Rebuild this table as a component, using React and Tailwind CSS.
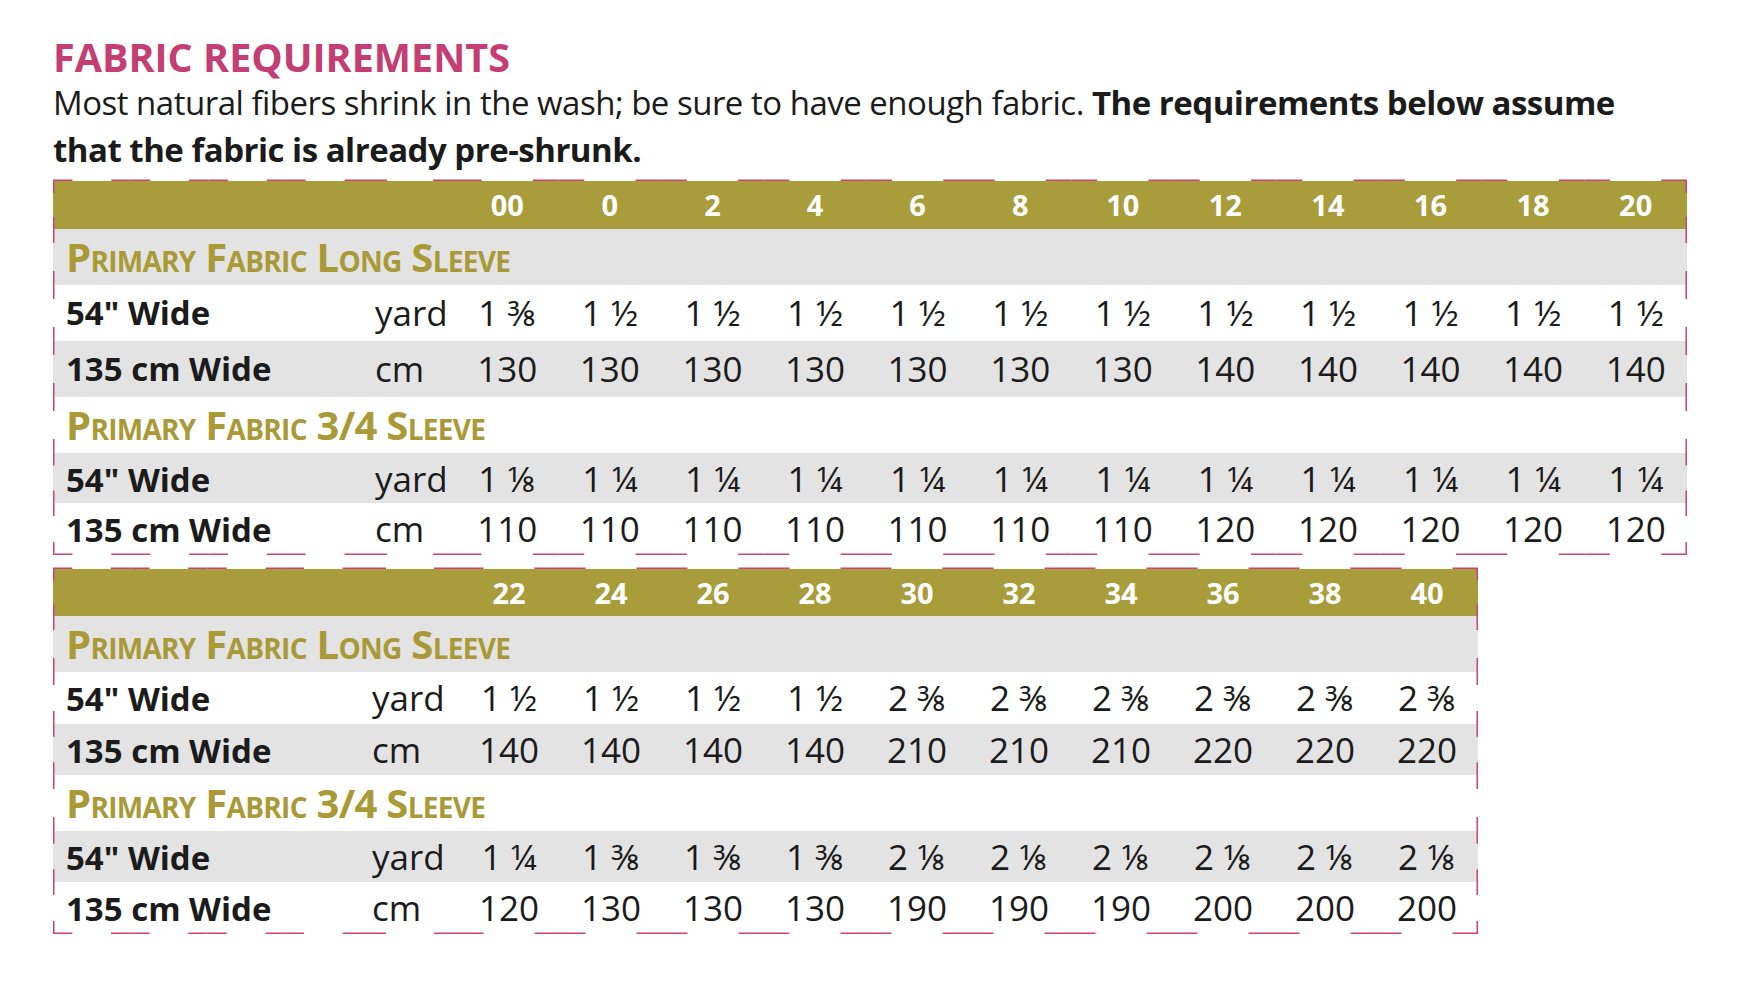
import React from "react";

const FONT = "[font-family:'Open_Sans',sans-serif]";

const table1 = {
  sizes: ["00", "0", "2", "4", "6", "8", "10", "12", "14", "16", "18", "20"],
  labelW: 311,
  unitW: 92,
  colW: 102.58,
  unitPad: "pl-[11px]",
  rowH: [48, 56, 56, 56, 56, 50, 52],
  long: {
    yard: ["1 ⅜", "1 ½", "1 ½", "1 ½", "1 ½", "1 ½", "1 ½", "1 ½", "1 ½", "1 ½", "1 ½", "1 ½"],
    cm: ["130", "130", "130", "130", "130", "130", "130", "140", "140", "140", "140", "140"],
  },
  three: {
    yard: ["1 ⅛", "1 ¼", "1 ¼", "1 ¼", "1 ¼", "1 ¼", "1 ¼", "1 ¼", "1 ¼", "1 ¼", "1 ¼", "1 ¼"],
    cm: ["110", "110", "110", "110", "110", "110", "110", "120", "120", "120", "120", "120"],
  },
};

const table2 = {
  sizes: ["22", "24", "26", "28", "30", "32", "34", "36", "38", "40"],
  labelW: 309,
  unitW: 96,
  colW: 102,
  unitPad: "pl-[10px]",
  rowH: [47, 56, 52, 51, 56, 51, 52],
  long: {
    yard: ["1 ½", "1 ½", "1 ½", "1 ½", "2 ⅜", "2 ⅜", "2 ⅜", "2 ⅜", "2 ⅜", "2 ⅜"],
    cm: ["140", "140", "140", "140", "210", "210", "210", "220", "220", "220"],
  },
  three: {
    yard: ["1 ¼", "1 ⅜", "1 ⅜", "1 ⅜", "2 ⅛", "2 ⅛", "2 ⅛", "2 ⅛", "2 ⅛", "2 ⅛"],
    cm: ["120", "130", "130", "130", "190", "190", "190", "200", "200", "200"],
  },
};

// dashed frame: every cell edge on the outside gets a dash at each end (1/4 of its length)
const DashFrame = ({ xs, ys }) => {
  const W = xs[xs.length - 1];
  const H = ys[ys.length - 1];
  const segs = [];
  for (let i = 0; i < xs.length - 1; i++) {
    const a = xs[i];
    const b = xs[i + 1];
    const q = (b - a) / 4;
    [-0.75, H - 0.75].forEach((y) => {
      segs.push([a, y, a + q, y]);
      segs.push([b - q, y, b, y]);
    });
  }
  for (let i = 0; i < ys.length - 1; i++) {
    const a = ys[i];
    const b = ys[i + 1];
    const q = (b - a) / 4;
    [0.75, W - 0.75].forEach((x) => {
      segs.push([x, a, x, a + q]);
      segs.push([x, b - q, x, b]);
    });
  }
  return (
    <svg
      className="pointer-events-none absolute left-0 top-0 overflow-visible"
      width={W}
      height={H}
    >
      {segs.map(([x1, y1, x2, y2], i) => (
        <line key={i} x1={x1} y1={y1} x2={x2} y2={y2} stroke="#c94379" strokeWidth="1.5" />
      ))}
    </svg>
  );
};

const SectionTitle = ({ children }) => (
  <span className="whitespace-nowrap pl-[13px] text-[40px] font-bold tracking-[-0.7px] text-[#a99a37] [font-variant-caps:small-caps]">
    {children}
  </span>
);

const SizeTable = ({ t }) => {
  const n = t.sizes.length;
  const W = t.labelW + t.unitW + t.colW * n;
  const cols = `${t.labelW}px ${t.unitW}px repeat(${n}, ${t.colW}px)`;
  const q = t.labelW / 4;
  const xs = [0, q, q * 2, q * 3, t.labelW, t.labelW + t.unitW];
  for (let i = 1; i <= n; i++) xs.push(t.labelW + t.unitW + t.colW * i);
  const ys = [0];
  t.rowH.forEach((h) => ys.push(ys[ys.length - 1] + h));

  const dataRow = (label, unit, vals, h, bg) => (
    <div className={`grid items-center ${bg}`} style={{ gridTemplateColumns: cols, height: h }}>
      <span className="whitespace-nowrap pl-[13px] text-[33px] font-bold">{label}</span>
      <span className={`${t.unitPad} text-[35px]`}>{unit}</span>
      {vals.map((v, i) => (
        <span key={i} className="whitespace-nowrap text-center text-[35px]">
          {v}
        </span>
      ))}
    </div>
  );

  return (
    <div className="relative text-[#1b1b1b]" style={{ width: W }}>
      <div
        className="grid items-center bg-[#a99c3b]"
        style={{ gridTemplateColumns: cols, height: t.rowH[0] }}
      >
        <span />
        <span />
        {t.sizes.map((s) => (
          <span key={s} className="text-center text-[29px] font-bold text-white">
            {s}
          </span>
        ))}
      </div>
      <div className="flex items-center bg-[#e3e3e3]" style={{ height: t.rowH[1] }}>
        <SectionTitle>Primary Fabric Long Sleeve</SectionTitle>
      </div>
      {dataRow('54" Wide', "yard", t.long.yard, t.rowH[2], "bg-white")}
      {dataRow("135 cm Wide", "cm", t.long.cm, t.rowH[3], "bg-[#e3e3e3]")}
      <div className="flex items-center bg-white" style={{ height: t.rowH[4] }}>
        <SectionTitle>Primary Fabric 3/4 Sleeve</SectionTitle>
      </div>
      {dataRow('54" Wide', "yard", t.three.yard, t.rowH[5], "bg-[#e3e3e3]")}
      {dataRow("135 cm Wide", "cm", t.three.cm, t.rowH[6], "bg-white")}
      <DashFrame xs={xs} ys={ys} />
    </div>
  );
};

export default function App() {
  return (
    <div className={`h-[990px] w-full overflow-hidden bg-white pl-[53px] pt-[36px] ${FONT}`}>
      <h1 className="text-[39.5px] font-bold leading-[43px] text-[#c43d73]">FABRIC REQUIREMENTS</h1>
      <p className="whitespace-nowrap text-[33px] leading-[47px] tracking-[-0.5px] text-[#1b1b1b]">
        Most natural fibers shrink in the wash; be sure to have enough fabric.{" "}
        <b className="font-bold">The requirements below assume</b>
        <br />
        <b className="font-bold">that the fabric is already pre-shrunk.</b>
      </p>
      <div className="mt-[8px] flex flex-col gap-[14px]">
        <SizeTable t={table1} />
        <SizeTable t={table2} />
      </div>
    </div>
  );
}
